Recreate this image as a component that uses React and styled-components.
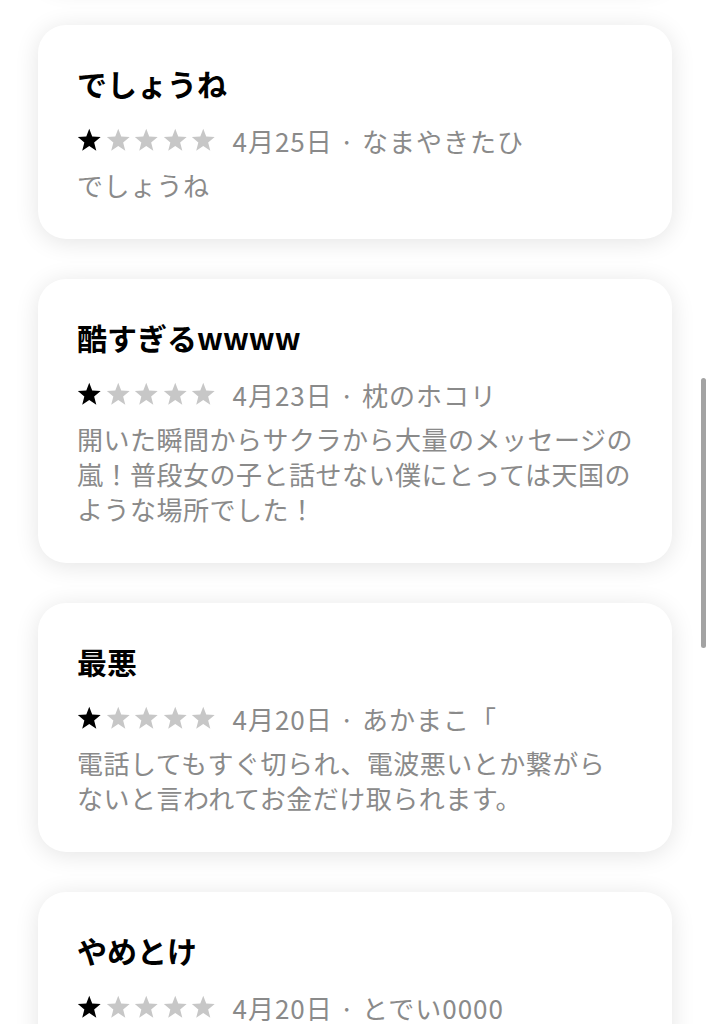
import React from 'react';
import styled, { createGlobalStyle } from 'styled-components';

const reviews = [
    { id: 1, title: 'でしょうね', rating: 1, date: '4月25日', author: 'なまやきたひ', lines: ['でしょうね'] },
    {
        id: 2,
        title: '酷すぎるwwww',
        rating: 1,
        date: '4月23日',
        author: '枕のホコリ',
        lines: ['開いた瞬間からサクラから大量のメッセージの', '嵐！普段女の子と話せない僕にとっては天国の', 'ような場所でした！'],
    },
    {
        id: 3,
        title: '最悪',
        rating: 1,
        date: '4月20日',
        author: 'あかまこ「',
        lines: ['電話してもすぐ切られ、電波悪いとか繋がら', 'ないと言われてお金だけ取られます。'],
    },
    { id: 4, title: 'やめとけ', rating: 1, date: '4月20日', author: 'とでい0000', lines: [] },
];

function Star({ filled }) {
    return (
        <StarIcon viewBox="0 0 24 24" $filled={filled}>
            <path d="M12 0.8l2.9 7.6 8.3.5-6.4 5.2 2.1 8.1L12 17.7l-6.9 4.5 2.1-8.1L0.8 8.9l8.3-.5z" />
        </StarIcon>
    );
}

function ReviewCard({ review }) {
    return (
        <Card>
            <Title>{review.title}</Title>
            <Meta>
                <Stars>
                    {[1, 2, 3, 4, 5].map((n) => (
                        <Star key={n} filled={n <= review.rating} />
                    ))}
                </Stars>
                <MetaText>
                    {review.date} · {review.author}
                </MetaText>
            </Meta>
            {review.lines.length > 0 && (
                <Body>
                    {review.lines.map((line, i) => (
                        <React.Fragment key={i}>
                            {i > 0 && <br />}
                            {line}
                        </React.Fragment>
                    ))}
                </Body>
            )}
        </Card>
    );
}

export default function App() {
    return (
        <>
            <GlobalStyle />
            <Screen>
                <List>
                    <PrevCard />
                    {reviews.map((r) => (
                        <ReviewCard key={r.id} review={r} />
                    ))}
                </List>
                <ScrollThumb />
            </Screen>
        </>
    );
}

const GlobalStyle = createGlobalStyle`
    *, *::before, *::after {
        box-sizing: border-box;
    }
    html, body {
        margin: 0;
        padding: 0;
        background: #fff;
        overflow: hidden;
    }
    body {
        font-family: "Noto Sans CJK JP", "Noto Sans", sans-serif;
    }
`;

const Screen = styled.div`
    position: relative;
    height: 1024px;
    overflow: hidden;
    background: #fff;
`;

const List = styled.div`
    display: flex;
    flex-direction: column;
    gap: 40px;
    padding: 0 39px 0 38px;
`;

const Card = styled.div`
    background: #fff;
    border-radius: 28px;
    box-shadow: 0 3px 24px rgba(0, 0, 0, 0.11);
    padding: 40px 39px 37px;
`;

// card above, scrolled mostly out of view
const PrevCard = styled(Card)`
    height: 100px;
    margin-top: -115px;
`;

const Title = styled.div`
    font-size: 30px;
    line-height: 36px;
    font-weight: 700;
    color: #000;
`;

const Meta = styled.div`
    display: flex;
    align-items: center;
    gap: 17px;
    height: 36px;
    margin-top: 21px;
`;

const Stars = styled.div`
    display: flex;
    gap: 4px;
`;

const StarIcon = styled.svg`
    width: 24.5px;
    height: 24.5px;
    fill: ${(props) => (props.$filled ? '#000' : '#c7c7c7')};
`;

const MetaText = styled.span`
    font-size: 26px;
    letter-spacing: 1px;
    color: #8a8a8a;
    white-space: nowrap;
`;

const Body = styled.p`
    margin: 9px 0 0;
    font-size: 26px;
    letter-spacing: 0.5px;
    line-height: 35px;
    color: #8a8a8a;
    white-space: nowrap;
`;

const ScrollThumb = styled.div`
    position: absolute;
    right: 5px;
    top: 378px;
    width: 5px;
    height: 270px;
    border-radius: 3px;
    background: #a3a3a3;
`;
